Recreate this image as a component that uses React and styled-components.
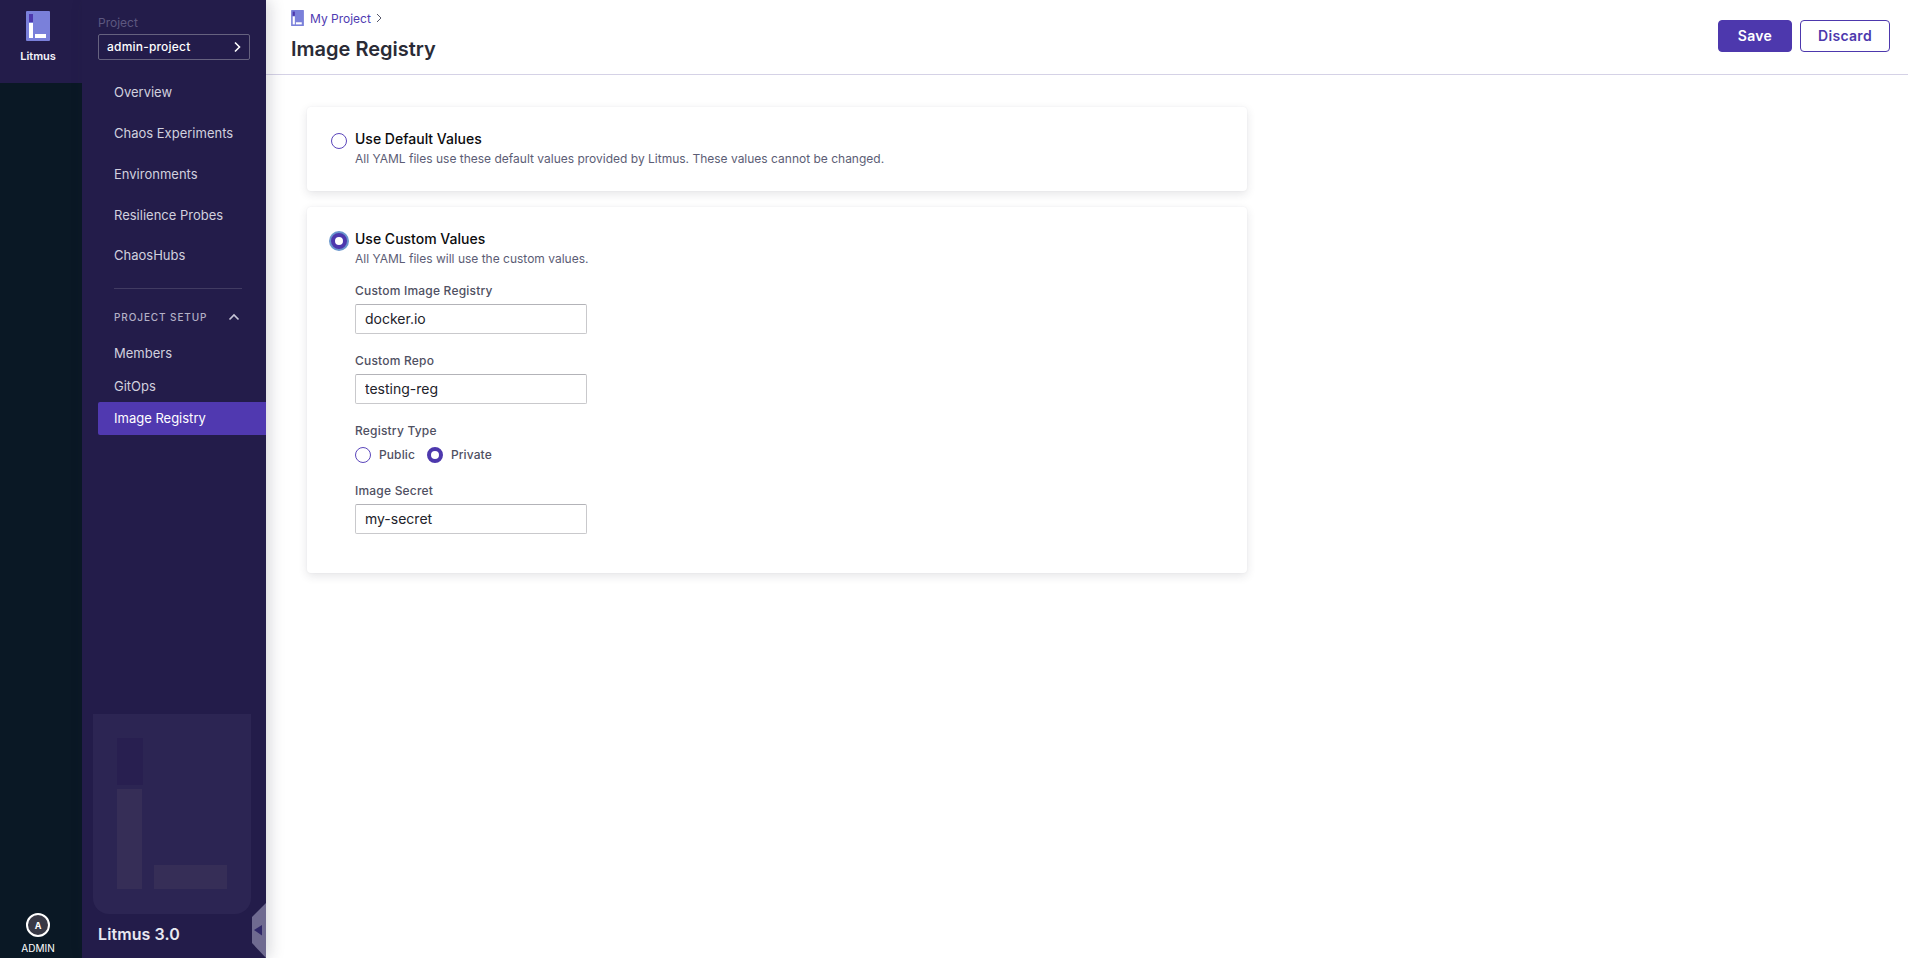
import React from 'react'
import styled, { createGlobalStyle } from 'styled-components'

const GlobalStyle = createGlobalStyle`
  html, body { margin: 0; padding: 0; height: 100%; background: #fff; }
  body { font-family: Inter, "Liberation Sans", sans-serif; -webkit-font-smoothing: antialiased; }
  * { box-sizing: border-box; }
`

const Page = styled.div`
  display: flex;
  height: 958px;
  width: 100%;
  overflow: hidden;
`

const Rail = styled.aside`
  width: 82px;
  flex: none;
  background: #0a1825;
  display: flex;
  flex-direction: column;
  align-items: center;
`

const RailTop = styled.div`
  width: 100%;
  height: 83px;
  background: #231c4a;
  display: flex;
  flex-direction: column;
  align-items: center;
  padding: 11px 6px 0 0;
`

const RailLogo = styled.svg`
  width: 24px;
  height: 30px;
  display: block;
`

const RailName = styled.div`
  margin-top: 8px;
  font-size: 11px;
  line-height: 14px;
  font-weight: 600;
  color: #f3f3fa;
`

const UserBlock = styled.div`
  margin-top: auto;
  width: 100%;
  display: flex;
  flex-direction: column;
  align-items: center;
  padding: 0 6px 3px 0;
`

const Avatar = styled.div`
  width: 24px;
  height: 24px;
  border: 2px solid #fff;
  border-radius: 50%;
  background: #383946;
  color: #fff;
  font-size: 9px;
  font-weight: 700;
  display: flex;
  align-items: center;
  justify-content: center;
`

const UserRole = styled.div`
  margin-top: 4px;
  font-size: 10px;
  line-height: 14px;
  color: #fff;
`

const Sidebar = styled.nav`
  position: relative;
  width: 184px;
  flex: none;
  background: #231c4a;
  display: flex;
  flex-direction: column;
  padding: 15px 0 0 16px;
  box-shadow: 4px 0 14px rgba(40, 41, 61, 0.18);
  z-index: 2;
`

const ProjectLabel = styled.div`
  font-size: 12px;
  line-height: 15px;
  color: #5d5880;
`

const ProjectSelect = styled.div`
  width: 152px;
  height: 26px;
  margin-top: 4px;
  padding: 0 7px 1px 8px;
  border: 1px solid #66627f;
  border-radius: 2px;
  display: flex;
  align-items: center;
  justify-content: space-between;
  font-size: 12px;
  font-weight: 500;
  letter-spacing: 0.2px;
  color: #fff;
`

const NavList = styled.div`
  display: flex;
  flex-direction: column;
  margin-top: 11px;
`

const NavItem = styled.div`
  height: ${p => p.$h}px;
  padding: 0 0 ${p => (p.$active ? 1 : 0)}px 16px;
  display: flex;
  align-items: center;
  font-size: 13px;
  color: ${p => (p.$active ? '#fff' : '#d1d0de')};
  background: ${p => (p.$active ? '#5039b0' : 'transparent')};
  border-radius: 2px 0 0 2px;
`

const Divider = styled.div`
  width: 128px;
  height: 1px;
  margin: 13px 0 0 16px;
  background: #413b62;
`

const SectionHead = styled.div`
  width: 126px;
  height: 16px;
  margin: 20px 0 11px 16px;
  display: flex;
  align-items: center;
  justify-content: space-between;
  font-size: 10px;
  font-weight: 500;
  letter-spacing: 0.9px;
  color: #b3b0c6;
`

const BrandPanel = styled.div`
  width: 158px;
  height: 200px;
  margin: auto 0 0 -5px;
  background: #2c2553;
  border-radius: 0 0 16px 16px;
  flex: none;
  display: flex;
`

const BrandMark = styled.svg`
  width: 158px;
  height: 200px;
  display: block;
`

const Version = styled.div`
  height: 44px;
  padding-top: 10px;
  font-size: 16px;
  line-height: 20px;
  font-weight: 600;
  letter-spacing: 0.1px;
  color: #e9e8f1;
`

const Collapse = styled.svg`
  position: absolute;
  right: 0;
  bottom: 0;
  width: 14px;
  height: 56px;
  display: block;
`

const Main = styled.main`
  flex: 1;
  min-width: 0;
  display: flex;
  flex-direction: column;
`

const Header = styled.header`
  height: 75px;
  flex: none;
  padding: 10px 18px 0 25px;
  border-bottom: 1px solid #d5d2e6;
  display: flex;
  justify-content: space-between;
  align-items: flex-start;
`

const Crumbs = styled.div`
  display: flex;
  align-items: center;
  height: 16px;
  font-size: 12px;
  color: #4f3bb2;
`

const CrumbLogo = styled.svg`
  width: 13px;
  height: 16px;
  display: block;
  margin-right: 6px;
`

const CrumbArrow = styled.svg`
  width: 14px;
  height: 12px;
  margin-left: 1px;
  display: block;
`

const Title = styled.h1`
  margin: 11px 0 0;
  font-size: 20px;
  line-height: 24px;
  font-weight: 600;
  color: #2a2b36;
`

const Actions = styled.div`
  display: flex;
  gap: 8px;
  margin-top: 10px;
`

const Button = styled.button`
  height: 32px;
  width: ${p => p.$w}px;
  padding: 0 0 2px;
  border-radius: 4px;
  border: 1px solid #4d38ad;
  background: ${p => (p.$solid ? '#4d38ad' : '#fff')};
  color: ${p => (p.$solid ? '#fff' : '#4d38ad')};
  font-family: inherit;
  font-size: 14px;
  font-weight: 600;
  letter-spacing: 0.3px;
`

const Content = styled.div`
  padding: 32px 0 0 41px;
  display: flex;
  flex-direction: column;
  gap: 16px;
`

const Card = styled.section`
  width: 940px;
  height: ${p => p.$h}px;
  padding: 23px 24px 0;
  background: #fff;
  border-radius: 4px;
  box-shadow: 0 3px 10px rgba(40, 41, 61, 0.12), 0 0 2px rgba(40, 41, 61, 0.06);
`

const OptionRow = styled.div`
  display: flex;
  align-items: flex-start;
  gap: 8px;
`

const Radio = styled.span`
  flex: none;
  width: 16px;
  height: 16px;
  border-radius: 50%;
  background: #fff;
  border: ${p => (p.$on ? '4px solid #4d38ad' : '1px solid #5b46bb')};
  box-shadow: ${p => (p.$focus ? '0 0 0 2px #6a97cd' : 'none')};
  margin-top: ${p => p.$top || 0}px;
`

const OptionTitle = styled.div`
  font-size: 14px;
  line-height: 17px;
  font-weight: 500;
  color: #0b0b0d;
`

const OptionDesc = styled.div`
  margin-top: 4px;
  font-size: 12px;
  line-height: 15px;
  color: #5c5d75;
`

const Fields = styled.div`
  margin-left: 24px;
`

const Field = styled.div`
  margin-top: ${p => p.$top}px;
`

const FieldLabel = styled.div`
  font-size: 12px;
  line-height: 15px;
  font-weight: 500;
  letter-spacing: 0.2px;
  color: #4f5062;
`

const TextBox = styled.input`
  display: block;
  width: 232px;
  height: 30px;
  margin-top: 6px;
  padding: 0 9px 1px;
  border: 1px solid #c9c9cc;
  border-top-color: #b3b3b8;
  border-radius: 2px;
  background: #fff;
  font-family: inherit;
  font-size: 14px;
  color: #22222a;
  outline: none;
`

const RadioGroup = styled.div`
  display: flex;
  align-items: center;
  margin-top: 9px;
  height: 16px;
`

const RadioLabel = styled.span`
  margin: 0 12px 1px 8px;
  font-size: 12px;
  line-height: 15px;
  font-weight: 500;
  letter-spacing: 0.1px;
  color: #4f5062;
`

const LitmusMark = ({ as: Svg }) => (
  <Svg viewBox="0 0 24 30">
    <rect width="24" height="30" rx="1" fill="#7a80da" />
    <rect x="3" y="3" width="4" height="8" fill="#4d38ad" />
    <rect x="3" y="12" width="4" height="15" fill="#fff" />
    <rect x="9" y="23" width="11" height="4" fill="#fff" />
  </Svg>
)

const menu = [
  ['Overview', 41],
  ['Chaos Experiments', 41],
  ['Environments', 41],
  ['Resilience Probes', 41],
  ['ChaosHubs', 40],
]

export default function App() {
  return (
    <Page>
      <GlobalStyle />
      <Rail>
        <RailTop>
          <LitmusMark as={RailLogo} />
          <RailName>Litmus</RailName>
        </RailTop>
        <UserBlock>
          <Avatar>A</Avatar>
          <UserRole>ADMIN</UserRole>
        </UserBlock>
      </Rail>
      <Sidebar>
        <ProjectLabel>Project</ProjectLabel>
        <ProjectSelect>
          admin-project
          <svg width="10" height="12" viewBox="0 0 10 12" fill="none" stroke="#fff" strokeWidth="1.6">
            <path d="M3 1.5 7.5 6 3 10.500" />
          </svg>
        </ProjectSelect>
        <NavList>
          {menu.map(([label, h]) => (
            <NavItem key={label} $h={h}>{label}</NavItem>
          ))}
        </NavList>
        <Divider />
        <SectionHead>
          PROJECT SETUP
          <svg width="12" height="8" viewBox="0 0 12 8" fill="none" stroke="#c8c6d8" strokeWidth="1.6">
            <path d="M1.500 6.500 6 2l4.500 4.500" />
          </svg>
        </SectionHead>
        <NavItem $h={33}>Members</NavItem>
        <NavItem $h={33}>GitOps</NavItem>
        <NavItem $h={33} $active>Image Registry</NavItem>
        <BrandPanel>
          <BrandMark viewBox="0 0 158 200">
            <rect x="24" y="24" width="26" height="47" fill="#281f50" />
            <rect x="24" y="75" width="25" height="100" fill="#362e57" />
            <rect x="61" y="151" width="73" height="24" fill="#362e57" />
          </BrandMark>
        </BrandPanel>
        <Version>Litmus 3.0</Version>
        <Collapse viewBox="0 0 14 56">
          <path d="M14 1 0 15v26l14 15z" fill="#6f6a90" />
          <path d="M10 23v10.500L2 28z" fill="#2f2768" />
        </Collapse>
      </Sidebar>
      <Main>
        <Header>
          <div>
            <Crumbs>
              <LitmusMark as={CrumbLogo} />
              My Project
              <CrumbArrow viewBox="0 0 14 12" fill="none" stroke="#55566a" strokeWidth="1">
                <path d="M5 2l4 4-4 4" />
              </CrumbArrow>
            </Crumbs>
            <Title>Image Registry</Title>
          </div>
          <Actions>
            <Button $solid $w={74}>Save</Button>
            <Button $w={90}>Discard</Button>
          </Actions>
        </Header>
        <Content>
          <Card $h={84}>
            <OptionRow>
              <Radio $top={3} />
              <div>
                <OptionTitle>Use Default Values</OptionTitle>
                <OptionDesc>All YAML files use these default values provided by Litmus. These values cannot be changed.</OptionDesc>
              </div>
            </OptionRow>
          </Card>
          <Card $h={366}>
            <OptionRow>
              <Radio $top={3} $on $focus />
              <div>
                <OptionTitle>Use Custom Values</OptionTitle>
                <OptionDesc>All YAML files will use the custom values.</OptionDesc>
              </div>
            </OptionRow>
            <Fields>
              <Field $top={17}>
                <FieldLabel>Custom Image Registry</FieldLabel>
                <TextBox readOnly value="docker.io" />
              </Field>
              <Field $top={19}>
                <FieldLabel>Custom Repo</FieldLabel>
                <TextBox readOnly value="testing-reg" />
              </Field>
              <Field $top={19}>
                <FieldLabel>Registry Type</FieldLabel>
                <RadioGroup>
                  <Radio />
                  <RadioLabel>Public</RadioLabel>
                  <Radio $on />
                  <RadioLabel>Private</RadioLabel>
                </RadioGroup>
              </Field>
              <Field $top={20}>
                <FieldLabel>Image Secret</FieldLabel>
                <TextBox readOnly value="my-secret" />
              </Field>
            </Fields>
          </Card>
        </Content>
      </Main>
    </Page>
  )
}
